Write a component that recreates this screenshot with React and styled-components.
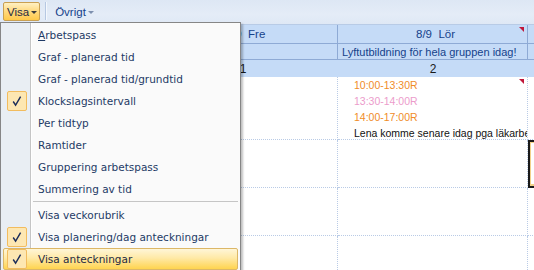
import React from "react";
import styled, { createGlobalStyle } from "styled-components";

const GlobalStyle = createGlobalStyle`
  html, body { margin: 0; padding: 0; background: #fff; }
  body { font-family: "DejaVu Sans", "Liberation Sans", sans-serif; }
`;

const SPage = styled.div`
  position: relative;
  width: 534px;
  height: 270px;
  overflow: hidden;
  background: #fff;
  display: flex;
  flex-direction: column;
`;

const SToolbar = styled.div`
  height: 25px;
  flex: none;
  display: flex;
  align-items: flex-start;
  padding: 2px 0 0 3px;
  box-sizing: border-box;
  gap: 2px;
  background: linear-gradient(#dde7f4, #e4ecf7 60%, #dfe8f5);
  border-bottom: 1px solid #b8cbe6;
  font-family: "Liberation Sans", Arial, sans-serif;
`;

const SToolButton = styled.div`
  height: 19px;
  box-sizing: border-box;
  display: flex;
  align-items: center;
  gap: 2px;
  padding: 0 2px 0 3px;
  font-size: 11.5px;
  color: ${(p) => (p.$active ? "#1e2a44" : "#15428b")};
  border: 1px solid ${(p) => (p.$active ? "#c9a052" : "transparent")};
  border-radius: 2px;
  background: ${(p) =>
    p.$active ? "linear-gradient(#fff0c2, #ffd97e 50%, #ffc94a)" : "transparent"};
`;

const SToolSep = styled.div`
  width: 1px;
  height: 18px;
  background: #b6c8e2;
  box-shadow: 1px 0 0 #f4f8fd;
  margin: 0 3px;
`;

const SArrow = styled.span`
  width: 0;
  height: 0;
  border-left: 3px solid transparent;
  border-right: 3px solid transparent;
  border-top: 3px solid ${(p) => p.$color || "#3a3a3a"};
  margin-top: 1px;
`;

const SGrid = styled.div`
  display: grid;
  grid-template-columns: 148px 190px 190px 1fr;
  font-family: "Liberation Sans", Arial, sans-serif;
  font-size: 11px;
`;

const SHeadCell = styled.div`
  height: ${(p) => p.$h}px;
  box-sizing: border-box;
  background: #c5dbf7;
  color: ${(p) => p.$color || "#15428b"};
  font-size: ${(p) => (p.$big ? "11.5px" : "11px")};
  display: flex;
  align-items: center;
  justify-content: ${(p) => (p.$left ? "flex-start" : "center")};
  padding-left: ${(p) => (p.$left ? "4px" : "6px")};
  border-bottom: 1px solid #8eaad5;
  border-right: ${(p) => (p.$noRight ? "none" : "1px solid #8eaad5")};
  white-space: pre;
  overflow: hidden;
  position: relative;
`;

const SDayRow = styled.div`
  grid-column: 1 / -1;
  display: grid;
  grid-template-columns: 148px 190px 190px 1fr;
  height: 17px;
  background: #c5dbf7;
  align-items: center;
  font-size: 12px;
`;

const SDayNum = styled.div`
  text-align: center;
  color: #1a1a1a;
`;

const SCorner = styled.span`
  position: absolute;
  right: 3px;
  top: 2px;
  width: 0;
  height: 0;
  border-left: 5px solid transparent;
  border-top: 5px solid #c0173a;
`;

const SBodyCell = styled.div`
  height: ${(p) => p.$h}px;
  box-sizing: border-box;
  border-right: 1px dotted #b9cbe6;
  border-bottom: 1px dotted #b9cbe6;
  padding: 0 0 0 16px;
  position: relative;
  overflow: hidden;
  white-space: nowrap;
  ${(p) =>
    p.$selected &&
    "outline: 2px solid #1a1a1a; outline-offset: -2px; box-shadow: inset 0 0 0 3px #f3d28a;"}
`;

const SEntry = styled.div`
  font-size: 10.5px;
  line-height: 16px;
  color: ${(p) => p.$color};
`;

const SMenu = styled.div`
  position: absolute;
  left: 0;
  top: 22px;
  width: 241px;
  height: 260px;
  box-sizing: border-box;
  border: 1px solid #868686;
  background: linear-gradient(to right, #e9eef3 0, #e9eef3 29px, #c5c5c5 29px, #c5c5c5 30px, #fff 30px, #fff 31px, #fafafa 31px);
  box-shadow: 2px 2px 2px rgba(0, 0, 0, 0.25);
  padding: 1px 2px;
  font-family: "DejaVu Sans", "Liberation Sans", sans-serif;
  font-size: 10.5px;
  color: #1e3a66;
`;

const SItem = styled.div`
  height: 22px;
  box-sizing: border-box;
  display: flex;
  align-items: center;
  border: 1px solid ${(p) => (p.$hover ? "#dcb767" : "transparent")};
  border-radius: 2px;
  background: ${(p) =>
    p.$hover ? "linear-gradient(#fff6d8, #ffe9a6 45%, #ffd44f)" : "transparent"};
  color: ${(p) => (p.$hover ? "#1e2a44" : "#1e3a66")};
`;

const SIconSlot = styled.div`
  width: 30px;
  height: 100%;
  flex: none;
  display: flex;
  align-items: center;
  padding-left: 3px;
  box-sizing: border-box;
`;

const SCheckBox = styled.div`
  width: 20px;
  height: 20px;
  box-sizing: border-box;
  border: 1px solid #f2bc5e;
  border-radius: 2px;
  background: #fde7b2;
  display: flex;
  align-items: center;
  justify-content: center;
`;

const SLabelText = styled.span`
  padding-left: 4px;
  white-space: nowrap;
`;

const SSeparator = styled.div`
  height: 3px;
  margin-left: 30px;
  border-top: 1px solid #c5c5c5;
  box-sizing: border-box;
  margin-top: 1px;
`;

const Check = () => (
  <svg width="12" height="12" viewBox="0 0 12 12">
    <path d="M2.2 6.5 L4.6 10.2 L9.6 1.6" fill="none" stroke="#1b2d5a" strokeWidth="1.4" />
  </svg>
);

const MenuItem = ({ label, checked, hover }) => (
  <SItem $hover={hover}>
    <SIconSlot>
      {checked && (
        <SCheckBox>
          <Check />
        </SCheckBox>
      )}
    </SIconSlot>
    <SLabelText>{label}</SLabelText>
  </SItem>
);

export default function App() {
  return (
    <SPage>
      <GlobalStyle />
      <SToolbar>
        <SToolButton $active>
          Visa <SArrow />
        </SToolButton>
        <SToolSep />
        <SToolButton>
          Övrigt <SArrow $color="#7d8fae" />
        </SToolButton>
      </SToolbar>

      <SGrid>
        <SHeadCell $h={19} />
        <SHeadCell $h={19} $big>{"7/9  Fre"}</SHeadCell>
        <SHeadCell $h={19} $big>
          {"8/9  Lör"}
          <SCorner />
        </SHeadCell>
        <SHeadCell $h={19} $noRight />

        <SHeadCell $h={16} />
        <SHeadCell $h={16} />
        <SHeadCell $h={16} $left>
          Lyftutbildning för hela gruppen idag!
        </SHeadCell>
        <SHeadCell $h={16} $noRight />

        <SDayRow>
          <SDayNum />
          <SDayNum>1</SDayNum>
          <SDayNum>2</SDayNum>
          <SDayNum />
        </SDayRow>

        <SBodyCell $h={63} />
        <SBodyCell $h={63} />
        <SBodyCell $h={63}>
          <SEntry $color="#f08c28">10:00-13:30R</SEntry>
          <SEntry $color="#ec9ccb">13:30-14:00R</SEntry>
          <SEntry $color="#f08c28">14:00-17:00R</SEntry>
          <SEntry $color="#111">Lena komme senare idag pga läkarbesök</SEntry>
          <SCorner />
        </SBodyCell>
        <SBodyCell $h={63} />

        <SBodyCell $h={48} />
        <SBodyCell $h={48} />
        <SBodyCell $h={48} />
        <SBodyCell $h={48} $selected />

        <SBodyCell $h={48} />
        <SBodyCell $h={48} />
        <SBodyCell $h={48} />
        <SBodyCell $h={48} />

        <SBodyCell $h={48} />
        <SBodyCell $h={48} />
        <SBodyCell $h={48} />
        <SBodyCell $h={48} />
      </SGrid>

      <SMenu>
        <MenuItem label={<><u>A</u>rbetspass</>} />
        <MenuItem label="Graf - planerad tid" />
        <MenuItem label="Graf - planerad tid/grundtid" />
        <MenuItem label="Klockslagsintervall" checked />
        <MenuItem label="Per tidtyp" />
        <MenuItem label="Ramtider" />
        <MenuItem label="Gruppering arbetspass" />
        <MenuItem label="Summering av tid" />
        <SSeparator />
        <MenuItem label="Visa veckorubrik" />
        <MenuItem label="Visa planering/dag anteckningar" checked />
        <MenuItem label="Visa anteckningar" checked hover />
      </SMenu>
    </SPage>
  );
}
